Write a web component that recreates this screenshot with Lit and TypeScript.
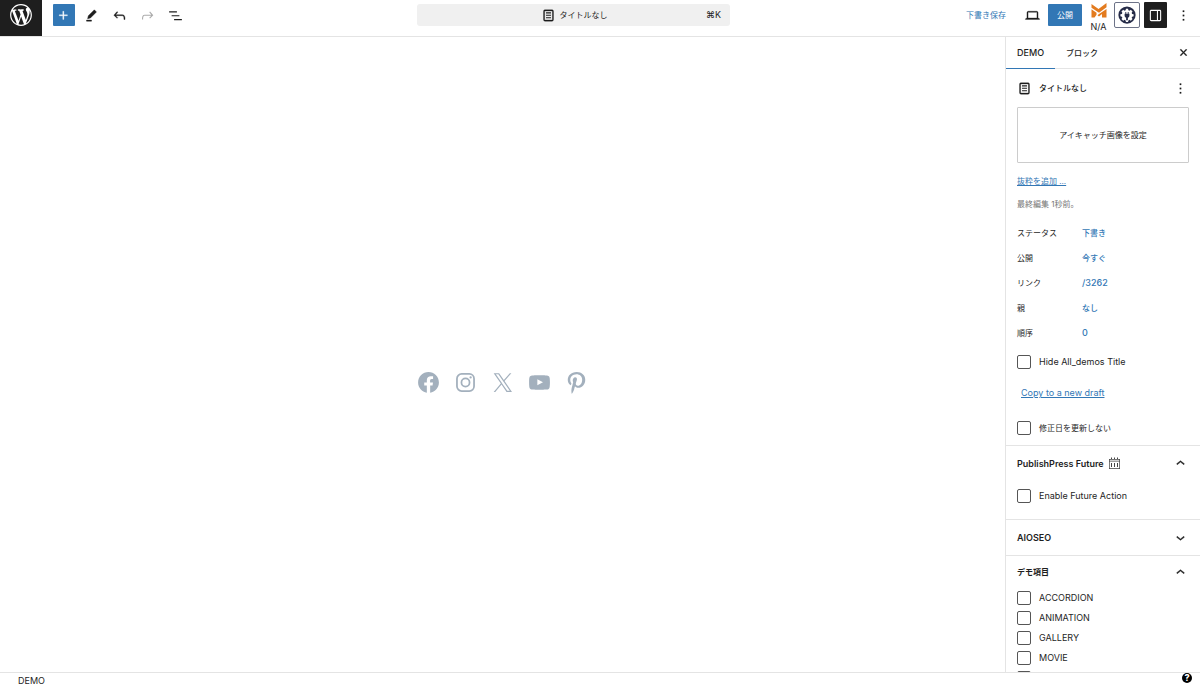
import { LitElement, html, css, svg } from "lit";
import { customElement, property, state } from "lit/decorators.js";
import { classMap } from "lit/directives/class-map.js";

const shared = css`
  * { box-sizing: border-box; }
  :host {
    font-family: Inter, "Noto Sans CJK JP", sans-serif;
    font-size: 9px;
    line-height: 14px;
    color: #1e1e1e;
  }
  button, input { font: inherit; color: inherit; margin: 0; }
  button { border: 0; padding: 0; background: none; cursor: pointer; }
  svg { display: block; fill: currentColor; }
  .ja { font-size: 8px; }
  .s17 { width: 17px; height: 17px; }
`;

const icon = (body: unknown, cls = "s17") =>
  html`<svg class=${cls} viewBox="0 0 24 24" aria-hidden="true">${body}</svg>`;

const glyphs = {
  plus: svg`<path d="M11 12.5V17.5H12.5V12.5H17.5V11H12.5V6H11V11H6V12.5H11Z" stroke="currentColor" stroke-width="0.4"/>`,
  edit: svg`<path d="m19 7-3-3-8.5 8.5-1 4 4-1L19 7Zm-7 11.5H5V20h7v-1.5Z" stroke="currentColor" stroke-width="0.6"/>`,
  undo: svg`<path d="M18.3 11.7c-.6-.6-1.4-.9-2.3-.9H6.7l2.9-3.3-1.1-1-4.5 5L8.5 16l1-1-2.7-2.7H16c.5 0 .9.2 1.3.5 1 1 1 3.4 1 4.5v.3h1.5v-.2c0-1.5 0-4.3-1.5-5.7z" stroke="currentColor" stroke-width="0.5"/>`,
  redo: svg`<path d="M15.6 6.5l-1.1 1 2.9 3.3H8c-.9 0-1.7.3-2.3.9-1.4 1.5-1.4 4.2-1.4 5.6v.2h1.5v-.3c0-1.1 0-3.5 1-4.5.3-.3.7-.5 1.3-.5h9.2L14.5 15l1.1 1.1 4.6-4.6-4.6-5z"/>`,
  list: svg`<path d="M3 6h11v1.7H3V6Zm3.5 5.5h11v1.7h-11v-1.7Zm3.5 5.5h11v1.7H10V17Z"/>`,
  page: svg`<path d="M15.5 7.5h-7V9h7V7.5Zm-7 3.5h7v1.5h-7V11Zm7 3.5h-7V16h7v-1.5Z"/><path d="M17 4H7a2 2 0 0 0-2 2v12a2 2 0 0 0 2 2h10a2 2 0 0 0 2-2V6a2 2 0 0 0-2-2ZM7 5.5h10a.5.5 0 0 1 .5.5v12a.5.5 0 0 1-.5.5H7a.5.5 0 0 1-.5-.5V6a.5.5 0 0 1 .5-.5Z" stroke="currentColor" stroke-width="0.5"/>`,
  desktop: svg`<path d="M20.5 16h-.7V8c0-1.1-.9-2-2-2H6.2c-1.1 0-2 .9-2 2v8h-.7c-.8 0-1.5.7-1.5 1.5h20c0-.8-.7-1.5-1.5-1.5zM5.7 8c0-.3.2-.5.5-.5h11.6c.3 0 .5.2.5.5v7.6H5.7V8z" stroke="currentColor" stroke-width="0.5"/>`,
  drawer: svg`<path fill-rule="evenodd" d="M18 4H6c-1.1 0-2 .9-2 2v12c0 1.1.9 2 2 2h12c1.1 0 2-.9 2-2V6c0-1.1-.9-2-2-2zm-4 14.500H6c-.3 0-.5-.2-.5-.5V6c0-.3.2-.5.5-.5h8v13zm4.500-.5c0 .3-.2.5-.5.5h-2.500v-13H18c.3 0 .5.2.5.5v12z"/>`,
  more: svg`<path d="M13 19h-2v-2h2v2zm0-6h-2v-2h2v2zm0-6h-2V5h2v2z" stroke="currentColor" stroke-width="0.3"/>`,
  close: svg`<path d="M12 13.060l3.712 3.713 1.061-1.060L13.061 12l3.712-3.712-1.060-1.060L12 10.938 8.288 7.227l-1.061 1.060L10.939 12l-3.712 3.712 1.060 1.061L12 13.061z" stroke="currentColor" stroke-width="0.5"/>`,
  up: svg`<path d="M6.5 12.400L12 8l5.500 4.400-.9 1.200L12 10l-4.500 3.600-1-1.200z" stroke="currentColor" stroke-width="0.6"/>`,
  down: svg`<path d="M17.500 11.600L12 16l-5.500-4.400.9-1.200L12 14l4.500-3.600 1 1.200z" stroke="currentColor" stroke-width="0.6"/>`,
};

const socials = [
  { name: "Facebook", art: svg`<path d="M12 2C6.500 2 2 6.500 2 12c0 5 3.700 9.100 8.400 9.900v-7H7.900V12h2.500V9.800c0-2.500 1.500-3.900 3.800-3.900 1.100 0 2.200.2 2.200.2v2.500h-1.300c-1.200 0-1.600.8-1.600 1.600V12h2.800l-.4 2.900h-2.300v7C18.300 21.100 22 17 22 12c0-5.500-4.500-10-10-10z"/>` },
  { name: "Instagram", art: svg`<g fill="none" stroke="currentColor" stroke-width="1.700"><rect x="3.800" y="3.800" width="16.400" height="16.400" rx="4.500"/><circle cx="12" cy="12" r="3.900"/></g><circle cx="16.900" cy="7.100" r="1.100"/>` },
  { name: "X", art: svg`<path d="M13.982 10.622 20.540 3h-1.554l-5.693 6.618L8.745 3H3.500l6.876 10.007L3.500 21h1.554l6.012-6.989L15.868 21h5.245l-7.131-10.378Zm-2.128 2.474-.697-.997-5.543-7.930H8l4.474 6.400.697.996 5.815 8.318h-2.387l-4.745-6.787Z"/>` },
  { name: "YouTube", art: svg`<path d="M21.800 8s-.195-1.377-.795-1.984c-.76-.797-1.613-.8-2.004-.847-2.798-.203-6.996-.203-6.996-.203h-.010s-4.197 0-6.996.202c-.39.046-1.242.05-2.003.846C2.395 6.623 2.200 8 2.200 8S2 9.620 2 11.240v1.517c0 1.618.2 3.237.2 3.237s.195 1.378.795 1.985c.76.797 1.760.77 2.205.855 1.600.153 6.800.2 6.800.2s4.203-.005 7-.208c.392-.047 1.244-.05 2.005-.847.6-.607.795-1.985.795-1.985s.2-1.618.2-3.237v-1.517C22 9.620 21.800 8 21.800 8zM9.935 14.595v-5.620l5.403 2.820-5.403 2.800z"/>` },
  { name: "Pinterest", art: svg`<path d="M12.289 2C6.617 2 3.606 5.648 3.606 9.622c0 1.846 1.025 4.146 2.666 4.878.25.111.381.063.439-.169.044-.175.267-1.029.365-1.428a.37.37 0 0 0-.091-.362c-.54-.63-.975-1.791-.975-2.881 0-2.777 2.194-5.464 5.933-5.464 3.230 0 5.490 2.108 5.490 5.122 0 3.407-1.794 5.768-4.130 5.768-1.291 0-2.257-1.021-1.948-2.277.372-1.495 1.089-3.112 1.089-4.191 0-.967-.542-1.775-1.663-1.775-1.319 0-2.379 1.309-2.379 3.059 0 1.115.394 1.869.394 1.869s-1.302 5.279-1.540 6.261c-.405 1.666.053 4.368.094 4.604.021.126.167.169.25.063.129-.165 1.699-2.419 2.142-4.051.158-.590.817-2.995.817-2.995.43.784 1.681 1.446 3.013 1.446 3.963 0 6.822-3.494 6.822-7.833C20.394 5.112 16.849 2 12.289 2"/>` },
];

@customElement("editor-header")
class EditorHeader extends LitElement {
  static styles = [shared, css`
    :host { display: block; }
    .bar {
      display: grid;
      grid-template-columns: 417fr 313fr 470fr;
      height: 37px;
      border-bottom: 1px solid #e4e4e4;
    }
    .left, .right { display: flex; align-items: flex-start; }
    .logo { width: 42px; height: 36px; background: #1e1e1e; color: #fff; display: flex; justify-content: center; padding-top: 4px; margin-right: 11px; }
    .logo svg { width: 24px; height: 24px; margin-top: -1px; }
    .tools { display: flex; gap: 6px; padding-top: 4px; }
    .tool { width: 22px; height: 22px; display: grid; place-items: center; border-radius: 1px; }
    .tools .tool { justify-items: start; padding-left: 2px; }
    .primary { background: #3277b5; color: #fff; }
    .off { color: #aaa; }
    .command {
      display: grid; grid-template-columns: 1fr auto 1fr; align-items: center;
      height: 22px; margin-top: 4px; padding: 0 9px; background: #f0f0f0; border-radius: 3px; width: 100%;
    }
    .name { grid-column: 2; display: flex; align-items: center; gap: 3px; }
    .keys { text-align: right; }
    .right { justify-content: flex-end; padding: 2px 6px 0 0; }
    .right .row { display: flex; align-items: center; height: 26px; }
    .save { color: #3277b5; margin-right: 15px; }
    .view { margin-right: 5px; }
    .publish { width: 34px; height: 22px; background: #3277b5; color: #fff; border-radius: 1px; margin-right: 8px; }
    .score { width: 17px; display: grid; justify-items: center; margin-right: 7px; line-height: 10px; gap: 4px; }
    .score svg { width: 16px; height: 16px; color: #e37b1f; }
    .gear { width: 26px; height: 26px; border: 1px solid #6d7388; border-radius: 2px; color: #252b48; display: grid; place-items: center; margin-right: 4px; }
    .gear svg { width: 18px; height: 18px; }
    .panel { width: 23px; height: 26px; background: #1e1e1e; color: #fff; border-radius: 1px; display: grid; place-items: center; margin-right: 5px; }
  `];

  render() {
    return html`
      <header class="bar">
        <div class="left">
          <a class="logo" href="#" aria-label="WordPress">
            <svg viewBox="-1 -1 22 22"><path d="M20 10c0-5.510-4.490-10-10-10C4.480 0 0 4.490 0 10c0 5.520 4.480 10 10 10 5.510 0 10-4.480 10-10zM7.780 15.370L4.370 6.220c.55-.02 1.170-.08 1.170-.08.5-.06.44-1.130-.06-1.110 0 0-1.450.11-2.370.11-.18 0-.37 0-.58-.010C4.120 2.690 6.870 1.110 10 1.110c2.330 0 4.450.87 6.050 2.340-.68-.11-1.650.39-1.650 1.580 0 .74.45 1.360.9 2.100.35.61.55 1.360.55 2.460 0 1.490-1.400 5-1.400 5l-3.030-8.370c.54-.02.82-.17.82-.17.5-.05.44-1.250-.06-1.220 0 0-1.440.12-2.380.12-.87 0-2.330-.12-2.330-.12-.5-.03-.56 1.200-.06 1.220l.92.08 1.260 3.410zM17.410 10c.24-.64.74-1.870.43-4.250.7 1.290 1.050 2.710 1.050 4.250 0 3.290-1.730 6.240-4.400 7.780.97-2.590 1.940-5.200 2.920-7.780zM6.100 18.090C3.120 16.650 1.110 13.530 1.110 10c0-1.300.23-2.480.72-3.590C3.250 10.300 4.670 14.200 6.100 18.090zm4.030-6.630l2.580 6.980c-.86.29-1.760.45-2.710.45-.79 0-1.570-.11-2.290-.33.81-2.380 1.620-4.740 2.420-7.100z"/></svg>
          </a>
          <div class="tools">
            <button class="tool primary" aria-label="追加">${icon(glyphs.plus)}</button>
            <button class="tool" aria-label="編集">${icon(glyphs.edit)}</button>
            <button class="tool" aria-label="元に戻す">${icon(glyphs.undo)}</button>
            <button class="tool off" aria-label="やり直す" disabled>${icon(glyphs.redo)}</button>
            <button class="tool" aria-label="一覧">${icon(glyphs.list)}</button>
          </div>
        </div>
        <button class="command">
          <span class="name">${icon(glyphs.page)}<span class="ja">タイトルなし</span></span>
          <span class="keys">⌘K</span>
        </button>
        <div class="right">
          <div class="row">
            <button class="save ja">下書き保存</button>
            <button class="tool view" aria-label="表示">${icon(glyphs.desktop)}</button>
            <button class="publish ja">公開</button>
          </div>
          <div class="score">
            <svg viewBox="0 0 16 16" aria-hidden="true"><path d="M0.500 2 7.500 7 15.500 1V5.200L8 10.800 0.500 5.800ZM0.500 7.300 5.500 10.800V12.800L3.500 15.500H0.500ZM15.500 7V15.500H11V12L8 14.400 6.500 13.200 8 12.100Z"/></svg>
            <span>N/A</span>
          </div>
          <div class="row">
            <button class="gear" aria-label="AIOSEO">
              <svg viewBox="0 0 24 24"><circle cx="12" cy="12" r="11.500"/><path fill="#fff" d="M10.600 3.500h2.800l.4 2 1.500.7 1.800-1.200 2.300 2.300-1.200 1.800.6 1.500 2 .4v2.700l-2 .5-.6 1.500 1.200 1.700-2.300 2.300-1.800-1.200-1.500.7-.4 2h-2.800l-.4-2-1.500-.7-1.800 1.200-2.300-2.300 1.200-1.700-.6-1.500-2-.5v-2.700l2-.4.6-1.500-1.200-1.800L6.900 5l1.800 1.200 1.500-.7z"/><path d="M9.800 8h1.200v2.300h2V8h1.200v2.300h1v2.700a2.500 2.500 0 0 1-2 2.500V19h-2.400v-3.500a2.500 2.500 0 0 1-2-2.500v-2.700h1z"/></svg>
            </button>
            <button class="panel" aria-label="設定">${icon(glyphs.drawer)}</button>
            <button class="tool" aria-label="オプション">${icon(glyphs.more)}</button>
          </div>
        </div>
      </header>`;
  }
}

@customElement("check-row")
class CheckRow extends LitElement {
  @property() label = "";
  @property({ type: Boolean }) ja = false;
  static styles = [shared, css`
    :host { display: block; }
    .check { display: flex; align-items: center; gap: 8px; }
    .box { appearance: none; width: 14px; height: 14px; border: 1px solid #555; border-radius: 2px; background: #fff; }
    .box:checked { background: #3277b5; }
  `];
  render() {
    return html`<label class="check"><input class="box" type="checkbox" aria-label=${this.label || "その他"}>${this.label ? html`<span class=${classMap({ ja: this.ja })}>${this.label}</span>` : null}</label>`;
  }
}

@customElement("editor-sidebar")
class EditorSidebar extends LitElement {
  @state() private tab = 0;

  static styles = [shared, css`
    :host { display: block; border-left: 1px solid #e4e4e4; overflow: hidden; }
    .tabs { display: flex; height: 32px; border-bottom: 1px solid #e4e4e4; padding-right: 8px; }
    .tab { padding: 0 11px; font-weight: 500; height: 32px; border-bottom: 1px solid transparent; }
    .active { border-bottom-color: #3277b5; }
    .spacer { flex: 1; }
    .close { align-self: center; }
    .section { padding: 0 11px; border-bottom: 1px solid #e4e4e4; }
    .summary { height: 377px; }
    .title { display: flex; align-items: center; gap: 6px; height: 38px; }
    .title b { font-weight: 500; }
    .title .s17 { margin-left: -1px; }
    .title button { margin-left: auto; }
    .image { display: block; width: 100%; height: 56px; border: 1px solid #ccc; border-radius: 1px; }
    a { color: #3277b5; text-decoration: underline; }
    .excerpt { padding-top: 11px; }
    .edited { padding-top: 9px; color: #757575; }
    .facts { margin: 9px 0 0; display: grid; grid-template-columns: 65px 1fr; grid-auto-rows: 25px; align-items: center; }
    dt, dd { margin: 0; }
    .value { color: #3277b5; font-weight: 500; }
    .hide { padding-top: 10px; }
    .copy { padding: 17px 4px 21px; }
    .heading { display: flex; align-items: center; justify-content: space-between; width: 100%; height: 35px; font-weight: 600; text-align: left; }
    .heading > span { display: flex; align-items: center; gap: 4px; }
    .cal { width: 13px; height: 13px; color: #444; }
    .future { padding-top: 8px; padding-bottom: 16px; }
    .list { display: grid; grid-auto-rows: 20px; align-items: center; }
    .terms { border-bottom: 0; }
    .terms .heading { height: 32px; }
  `];

  private facts = [
    ["ステータス", "下書き", true], ["公開", "今すぐ", true], ["リンク", "/3262", false], ["親", "なし", true], ["順序", "0", false],
  ] as const;

  render() {
    return html`
      <div class="tabs" role="tablist">
        ${["DEMO", "ブロック"].map((t, i) => html`<button role="tab" aria-selected=${this.tab === i} class=${classMap({ tab: true, active: this.tab === i, ja: i === 1 })} @click=${() => (this.tab = i)}>${t}</button>`)}
        <span class="spacer"></span>
        <button class="close" aria-label="閉じる">${icon(glyphs.close)}</button>
      </div>
      <section class="section summary">
        <div class="title">${icon(glyphs.page)}<b class="ja">タイトルなし</b><button aria-label="操作">${icon(glyphs.more)}</button></div>
        <button class="image ja">アイキャッチ画像を設定</button>
        <div class="excerpt"><a class="ja" href="#">抜粋を追加 ...</a></div>
        <div class="edited"><span class="ja">最終編集 1秒前。</span></div>
        <dl class="facts">
          ${this.facts.map(([k, v, ja]) => html`<dt class="ja">${k}</dt><dd><button class=${classMap({ value: true, ja })}>${v}</button></dd>`)}
        </dl>
        <check-row class="hide" label="Hide All_demos Title"></check-row>
        <div class="copy"><a href="#">Copy to a new draft</a></div>
        <check-row label="修正日を更新しない" ja></check-row>
      </section>
      <section class="section">
        <button class="heading"><span>PublishPress Future
          <svg class="cal" viewBox="0 0 13 13" aria-hidden="true"><path fill-rule="evenodd" d="M1 2H3V0.500H4V2H6V0.500H7V2H9V0.500H10V2H12V12H1ZM1.700 4.500V11.300H11.300V4.500ZM1.700 2.700V3.700H11.300V2.700Z"/><path d="M3 6h1v4H3zm3 0h1v4H6zm3 0h1v4H9z"/></svg></span>
          ${icon(glyphs.up)}</button>
        <check-row class="future" label="Enable Future Action"></check-row>
      </section>
      <section class="section"><button class="heading">AIOSEO ${icon(glyphs.down)}</button></section>
      <section class="section terms">
        <button class="heading"><span class="ja">デモ項目</span>${icon(glyphs.up)}</button>
        <div class="list">${["ACCORDION", "ANIMATION", "GALLERY", "MOVIE", ""].map((t) => html`<check-row label=${t}></check-row>`)}</div>
      </section>`;
  }
}

@customElement("app-root")
class AppRoot extends LitElement {
  static styles = [shared, css`
    :host { display: flex; flex-direction: column; height: 100vh; background: #fff; overflow: hidden; }
    .body { flex: 1; min-height: 0; display: grid; grid-template-columns: 1fr 195px; }
    .canvas { display: flex; align-items: center; justify-content: center; gap: 12px; padding-top: 55px; color: #a3b0bd; }
    .social { color: inherit; }
    .s25 { width: 25px; height: 25px; }
    .footer { display: flex; justify-content: space-between; height: 17px; border-top: 1px solid #e4e4e4; padding: 0 8px 0 18px; line-height: 16px; }
    .help { width: 10px; height: 10px; border-radius: 50%; background: #000; color: #fff; font-size: 9px; line-height: 10px; font-weight: 800; text-align: center; }
  `];

  render() {
    return html`
      <editor-header></editor-header>
      <div class="body">
        <main class="canvas">${socials.map((s) => html`<a class="social" href="#" aria-label=${s.name}>${icon(s.art, "s25")}</a>`)}</main>
        <editor-sidebar></editor-sidebar>
      </div>
      <footer class="footer"><span>DEMO</span><button class="help" aria-label="ヘルプ">?</button></footer>`;
  }
}
